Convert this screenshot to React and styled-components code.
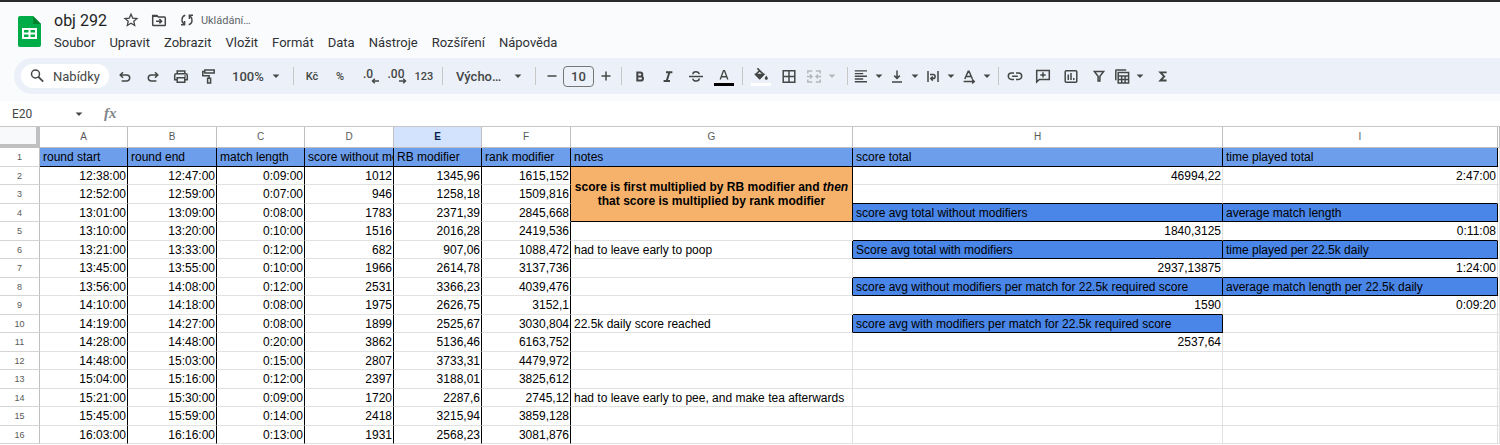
import React from 'react';
import styled, { createGlobalStyle, css } from 'styled-components';

const GlobalStyle = createGlobalStyle`
  * {
    box-sizing: border-box;
  }

  body {
    margin: 0;
    background: #fff;
    color: #444746;
    font-family: Roboto, 'Liberation Sans', sans-serif;
    font-size: 13px;
  }
`;

const Page = styled.div`
  height: 100vh;
  overflow: hidden;
`;

const Top = styled.header`
  padding: 7px 0;
  border-top: 2px solid #2b2b2e;
  background: #f9fbfd;
`;

const TitleBar = styled.div`
  display: flex;
  align-items: flex-start;
  padding-left: 18px;
`;

const Logo = styled.svg`
  display: block;
  width: 23px;
  height: 31px;
  margin: 7px 8px 0 0;
`;

const TitleRow = styled.div`
  display: flex;
  align-items: center;
  height: 22px;
  padding-left: 5px;
`;

const DocTitle = styled.h1`
  margin: 0 10px 0 0;
  color: #1f1f1f;
  font-size: 16px;
  font-weight: 400;
`;

const Status = styled.span`
  color: #5f6368;
  font-size: 11px;
`;

const Menu = styled.nav`
  display: flex;
  gap: 14px;
  height: 22px;
  align-items: center;
  padding-left: 5px;
`;

const MenuItem = styled.button`
  padding: 0;
  border: 0;
  background: none;
  color: #303134;
  font: inherit;
`;

const Toolbar = styled.div`
  display: flex;
  align-items: center;
  height: 36px;
  margin: 5px 0 0 14px;
  padding-left: 7px;
  border-radius: 18px 0 0 18px;
  background: #ecf1f9;
`;

const Search = styled.button`
  display: flex;
  align-items: center;
  gap: 7px;
  width: 88px;
  height: 24px;
  margin-right: 2px;
  padding: 0 0 0 7px;
  border: 0;
  border-radius: 12px;
  background: #fff;
  color: #444746;
  font: inherit;
`;

const Tool = styled.button`
  display: flex;
  flex: none;
  align-items: center;
  justify-content: center;
  width: ${({ $width }) => $width || 28}px;
  height: 24px;
  padding: 0;
  border: 0;
  background: none;
  color: ${({ $muted }) => ($muted ? '#b4b7bb' : '#444746')};
  font: inherit;
  font-size: ${({ $small }) => ($small ? 11 : 13)}px;
  font-weight: 500;
`;

const TextTool = styled(Tool)`
  justify-content: space-between;
  padding: 0 4px 0 9px;
`;

const DecimalTool = styled(Tool)`
  flex-direction: column;
  font-size: 12px;
  line-height: 12px;
`;

const BarTool = styled(Tool)`
  flex-direction: column;

  &::after {
    content: '';
    width: 20px;
    height: 3px;
    margin-top: -1px;
    background: ${({ $bar }) => $bar};
  }
`;

const Divider = styled.div`
  flex: none;
  width: 1px;
  height: 18px;
  margin: 0 ${({ $gap }) => $gap || 4}px;
  background: #c7c7c7;
`;

const SizeInput = styled.input`
  width: 31px;
  height: 21px;
  padding: 0;
  border: 1px solid #747775;
  border-radius: 4px;
  background: transparent;
  color: #444746;
  font: inherit;
  font-weight: 500;
  text-align: center;
`;

const Glyph = styled.svg`
  display: block;
  flex: none;
  width: 18px;
  height: 18px;
  fill: none;
  stroke: currentColor;
`;

const DecimalArrow = styled(Glyph)`
  width: 8px;
  height: 6px;
  margin-top: -2px;
  margin-left: 14px;
`;

const FormulaBar = styled.div`
  display: flex;
  align-items: center;
  height: 25px;
  padding-left: 12px;
`;

const NameBox = styled.input`
  width: 58px;
  padding: 0;
  border: 0;
  background: none;
  color: #444746;
  font: inherit;
  font-size: 12px;
`;

const Fx = styled.span`
  margin-left: 16px;
  color: #80868b;
  font-family: 'Liberation Serif', serif;
  font-size: 15px;
  font-style: italic;
  font-weight: 700;
`;

const Sheet = styled.table`
  width: 100%;
  table-layout: fixed;
  border-collapse: separate;
  border-spacing: 0;
  border-top: 1px solid #c7c7c7;
  color: #000;
  font-family: 'Liberation Sans', Arial, sans-serif;
  font-size: 12px;
  line-height: 16px;
`;

const Row = styled.tr`
  height: 18px;

  &:nth-child(odd) {
    height: 19px;
  }
`;

const ColumnHead = styled.th`
  height: 21px;
  padding: 0;
  border-right: 1px solid #c0c0c0;
  border-bottom: 1px solid #c0c0c0;
  background: ${({ $active }) => ($active ? '#d3e3fd' : '#fff')};
  color: ${({ $active }) => ($active ? '#041e49' : '#575a5a')};
  font-size: 10px;
  font-weight: ${({ $active }) => ($active ? 700 : 400)};
`;

const Corner = styled.td`
  padding: 0;
  border-right: 4px solid #c0c0c0;
  border-bottom: 4px solid #c0c0c0;
  background: #f8f9fa;
`;

const RowHead = styled.th`
  padding: 0;
  border-right: 1px solid #c0c0c0;
  border-bottom: 1px solid #d5d5d5;
  color: #575a5a;
  font-size: 9px;
  font-weight: 400;
`;

const fills = {
  head: '#6d9eeb',
  label: '#4a86e8',
  note: '#f6b26b',
};

const Cell = styled.td`
  padding: 0 0 0 3px;
  overflow: hidden;
  border-right: 1px solid ${({ $right }) => ($right ? '#000' : '#e1e1e1')};
  border-bottom: 1px solid ${({ $bottom }) => ($bottom ? '#000' : '#e1e1e1')};
  background: ${({ $fill }) => fills[$fill] || '#fff'};
  text-align: ${({ $number }) => ($number ? 'right' : 'left')};
  white-space: nowrap;

  ${({ $number }) =>
    $number &&
    css`
      padding-right: 1px;
    `}

  ${({ $fill }) =>
    $fill === 'note' &&
    css`
      padding: 0 3px;
      line-height: 14px;
      font-weight: 700;
      text-align: center;
      white-space: normal;
    `}
`;

const Icon = ({ children, ...props }) => (
  <Glyph viewBox="0 0 18 18" strokeWidth="1.5" aria-hidden="true" {...props}>
    {children}
  </Glyph>
);

const Caret = () => (
  <Icon>
    <path d="M5.6 7.5h6.8L9 11z" fill="currentColor" stroke="none" />
  </Icon>
);

const StarIcon = () => (
  <Icon strokeWidth="1.3">
    <path d="M9 3.2l1.7 3.9 4.3.4-3.2 2.8.9 4.2L9 12.3l-3.7 2.2.9-4.2L3 7.5l4.3-.4z" />
  </Icon>
);

const MoveIcon = () => (
  <Icon>
    <path d="M2.7 4.6h4.1l1.5 1.5h6.2q.8 0 .8.8v6.8q0 .8-.8.8H3.5q-.8 0-.8-.8z" />
    <path d="M3 5.3h5M6 10.2h5.4M9.4 8l2.2 2.2-2.2 2.2" />
  </Icon>
);

const SyncIcon = () => (
  <Icon>
    <path d="M7.3 4.2C3.6 5.2 2.8 10 5.6 12.7M3 13.7h3.6v-3.6M10.7 13.8c3.7-1 4.5-5.8 1.7-8.5M15 4.3h-3.6v3.6" />
  </Icon>
);

const SearchIcon = () => (
  <Icon>
    <circle cx="7.5" cy="7" r="4" />
    <path d="M10.4 9.9l4.8 4.8" strokeWidth="1.8" />
  </Icon>
);

const UndoIcon = () => (
  <Icon>
    <path d="M7 5.2L4.2 8l2.8 2.8M4.4 8h6.3a3 3 0 0 1 0 6H5.6" />
  </Icon>
);

const RedoIcon = () => (
  <Icon>
    <path d="M11 5.2L13.8 8 11 10.8M13.6 8H7.3a3 3 0 0 0 0 6h5.1" />
  </Icon>
);

const PrintIcon = () => (
  <Icon>
    <path d="M5.2 6.8V4.1h7.6v2.7M5 12.8H2.7V8.4q0-1.6 1.6-1.6h9.4q1.6 0 1.6 1.6v4.4H13M5.2 10.8h7.6v4.4H5.2z" />
    <path d="M12.3 8.9h1.5" />
  </Icon>
);

const PaintIcon = () => (
  <Icon>
    <path d="M4.8 2.9h9.4v3.2H4.8zM4.8 4.5H2.8v4.3h6.3v2.4M7.6 11.2h3v4.8h-3z" />
  </Icon>
);

const MinusIcon = () => (
  <Icon>
    <path d="M4.5 9h9" />
  </Icon>
);

const PlusIcon = () => (
  <Icon>
    <path d="M4.5 9h9M9 4.5v9" />
  </Icon>
);

const BoldIcon = () => (
  <Icon strokeWidth="2">
    <path d="M6.3 5.4h3a2 2 0 0 1 0 4h-3zM6.3 9.4h3.6a2.1 2.1 0 0 1 0 4.2H6.3z" />
  </Icon>
);

const ItalicIcon = () => (
  <Icon strokeWidth="1.9">
    <path d="M7 5.3h6.4M4.6 14H11M10.4 5.4l-2.7 8.5" />
  </Icon>
);

const StrikeIcon = () => (
  <Icon>
    <path d="M2 9.4h14M12.2 7.2C11.6 3.8 6 4 5.9 7.2M5.8 11.6c.5 3.4 6.4 3.2 6.4 0" />
  </Icon>
);

const TextColorIcon = () => (
  <Icon strokeWidth="1.4">
    <path d="M5.2 13.6L8.5 4.6h1l3.3 9M6.4 10.8h5.2" />
  </Icon>
);

const FillIcon = () => (
  <Icon>
    <path d="M5.4 2.4l6.3 6.2-4 4-4.1-4 4.6-4.5" />
    <path d="M4 8.6h7.4L7.7 12.2z" fill="currentColor" />
    <path d="M14.3 9.4c2.7 3.3 1.2 4.3 0 4.3s-2.7-1 0-4.3z" fill="currentColor" stroke="none" />
  </Icon>
);

const BordersIcon = () => (
  <Icon>
    <path d="M3.2 3.7h11.6v11.6H3.2zM9 3.7v11.6M3.2 9.5h11.6" />
  </Icon>
);

const MergeIcon = () => (
  <Icon>
    <path d="M2.8 6.4V4.1h4.4M10.8 4.1h4.4v2.3M2.8 12.6v2.3h4.4M10.8 14.9h4.4v-2.3M1.8 9.5h5M5 7.5l2 2-2 2M16.2 9.5h-5M13 7.5l-2 2 2 2" />
  </Icon>
);

const AlignIcon = () => (
  <Icon strokeWidth="1.4">
    <path d="M2.8 3.9H15M2.8 6.6h8.4M2.8 9.3H15M2.8 12h8.4M2.8 14.7H15" />
  </Icon>
);

const BottomIcon = () => (
  <Icon>
    <path d="M9 3.6v7.8M6.2 8.6L9 11.4l2.8-2.8M4 15h10" />
  </Icon>
);

const WrapIcon = () => (
  <Icon>
    <path d="M4 4v11M14 4v11M6 7.4h3a2.1 2.1 0 0 1 0 4.2H7M8.8 9.6l-2 2 2 2" />
  </Icon>
);

const RotateIcon = () => (
  <Icon>
    <path d="M4.8 12L8.2 4.2h.8l3.4 7.8M6 9.6h5.2M3.6 14.4h10.2M12.2 12.4l2 2-2 2" />
  </Icon>
);

const LinkIcon = () => (
  <Icon>
    <path d="M8 6H5.5a3.2 3.2 0 0 0 0 6.4H8M10 6h2.5a3.2 3.2 0 0 1 0 6.4H10M6.2 9.2h5.6" />
  </Icon>
);

const CommentIcon = () => (
  <Icon>
    <path d="M2.7 15V3.5h12.6v8.9H5.3zM9 5.2v5.4M6.3 7.9h5.4" />
  </Icon>
);

const ChartIcon = () => (
  <Icon>
    <rect x="3.2" y="3.7" width="11.6" height="11.6" rx="1" />
    <path d="M6.3 7.6v5.4M9 6v7M11.8 11v2" />
  </Icon>
);

const FilterIcon = () => (
  <Icon>
    <path d="M4.4 4.5h9.2L9.9 9.2v4.9H8.1V9.2z" />
  </Icon>
);

const TableIcon = () => (
  <Icon>
    <path d="M2.8 13.2V3.6q0-.6.6-.6h9.8M5.2 5.5h10.4v10.4H5.2zM5.2 8.9h10.4M8.7 8.9v7M12.1 8.9v7M5.2 12.4h10.4" />
  </Icon>
);

const SumIcon = () => (
  <Icon strokeWidth="1.9">
    <path d="M12.6 5.4H6.4l3.8 4-3.8 4.1h6.2" />
  </Icon>
);

const CaretTool = ({ label, muted, width = 36, children }) => (
  <Tool $width={width} $muted={muted} aria-label={label}>
    {children}
    <Caret />
  </Tool>
);

const menus = ['Soubor', 'Upravit', 'Zobrazit', 'Vložit', 'Formát', 'Data', 'Nástroje', 'Rozšíření', 'Nápověda'];

const columns = [
  ['A', 88],
  ['B', 89],
  ['C', 88],
  ['D', 89],
  ['E', 88],
  ['F', 89],
  ['G', 282],
  ['H', 370],
  ['I', 275],
];

const heads = [
  'round start',
  'round end',
  'match length',
  'score without modifiers',
  'RB modifier',
  'rank modifier',
  'notes',
  'score total',
  'time played total',
];

const rounds = [
  ['12:38:00', '12:47:00', '0:09:00', '1012', '1345,96', '1615,152'],
  ['12:52:00', '12:59:00', '0:07:00', '946', '1258,18', '1509,816'],
  ['13:01:00', '13:09:00', '0:08:00', '1783', '2371,39', '2845,668'],
  ['13:10:00', '13:20:00', '0:10:00', '1516', '2016,28', '2419,536'],
  ['13:21:00', '13:33:00', '0:12:00', '682', '907,06', '1088,472'],
  ['13:45:00', '13:55:00', '0:10:00', '1966', '2614,78', '3137,736'],
  ['13:56:00', '14:08:00', '0:12:00', '2531', '3366,23', '4039,476'],
  ['14:10:00', '14:18:00', '0:08:00', '1975', '2626,75', '3152,1'],
  ['14:19:00', '14:27:00', '0:08:00', '1899', '2525,67', '3030,804'],
  ['14:28:00', '14:48:00', '0:20:00', '3862', '5136,46', '6163,752'],
  ['14:48:00', '15:03:00', '0:15:00', '2807', '3733,31', '4479,972'],
  ['15:04:00', '15:16:00', '0:12:00', '2397', '3188,01', '3825,612'],
  ['15:21:00', '15:30:00', '0:09:00', '1720', '2287,6', '2745,12'],
  ['15:45:00', '15:59:00', '0:14:00', '2418', '3215,94', '3859,128'],
  ['16:03:00', '16:16:00', '0:13:00', '1931', '2568,23', '3081,876'],
];

const notes = {
  6: 'had to leave early to poop',
  10: '22.5k daily score reached',
  14: 'had to leave early to pee, and make tea afterwards',
};

// summary columns, keyed by sheet row
const labels = {
  4: ['score avg total without modifiers', 'average match length'],
  6: ['Score avg total with modifiers', 'time played per 22.5k daily'],
  8: ['score avg without modifiers per match for 22.5k required score', 'average match length per 22.5k daily'],
  10: ['score avg with modifiers per match for 22.5k required score'],
};

const totals = {
  2: ['46994,22', '2:47:00'],
  5: ['1840,3125', '0:11:08'],
  7: ['2937,13875', '1:24:00'],
  9: ['1590', '0:09:20'],
  11: ['2537,64'],
};

const SummaryCell = ({ row, index }) => {
  const label = labels[row]?.[index];
  const next = labels[row + 1]?.[index];

  return (
    <Cell
      $fill={label && 'label'}
      $number={!label}
      $right={label}
      $bottom={label || next}
    >
      {label || totals[row]?.[index]}
    </Cell>
  );
};

const SheetRow = ({ row, values }) => (
  <Row>
    <RowHead scope="row">{row}</RowHead>
    {values.map((value, i) => (
      <Cell key={i} $number $right>
        {value}
      </Cell>
    ))}
    {row === 2 && (
      <Cell rowSpan={3} $fill="note" $right $bottom>
        score is first multiplied by RB modifier and <em>then</em> that score is multiplied by rank modifier
      </Cell>
    )}
    {row > 4 && <Cell $right={labels[row]}>{notes[row]}</Cell>}
    <SummaryCell row={row} index={0} />
    <SummaryCell row={row} index={1} />
    <Cell />
  </Row>
);

export default () => (
  <Page>
    <GlobalStyle />
    <Top>
      <TitleBar>
        <Logo viewBox="0 0 23 31" aria-hidden="true">
          <path d="M2 0h13l8 8v21q0 2-2 2H2q-2 0-2-2V2q0-2 2-2z" fill="#00ac47" />
          <path d="M15 0l8 8h-8z" fill="#00832d" />
          <path d="M4 12h15v11H4zM6 14v2.5h4.5V14zM12.5 14v2.5H17V14zM6 18.5V21h4.5v-2.5zM12.5 18.5V21H17v-2.5z" fill="#fff" fillRule="evenodd" />
        </Logo>
        <div>
          <TitleRow>
            <DocTitle>obj 292</DocTitle>
            <Tool aria-label="Hvězdička"><StarIcon /></Tool>
            <Tool aria-label="Přesunout"><MoveIcon /></Tool>
            <Tool aria-label="Stav"><SyncIcon /></Tool>
            <Status>Ukládání…</Status>
          </TitleRow>
          <Menu>
            {menus.map((name) => (
              <MenuItem key={name}>{name}</MenuItem>
            ))}
          </Menu>
        </div>
      </TitleBar>

      <Toolbar>
        <Search>
          <SearchIcon />
          Nabídky
        </Search>
        <Tool aria-label="Zpět"><UndoIcon /></Tool>
        <Tool aria-label="Znovu"><RedoIcon /></Tool>
        <Tool aria-label="Tisk"><PrintIcon /></Tool>
        <Tool aria-label="Kopírovat formát"><PaintIcon /></Tool>
        <TextTool $width={66}>100%<Caret /></TextTool>
        <Divider />
        <Tool $small>Kč</Tool>
        <Tool $small>%</Tool>
        <DecimalTool>
          .0
          <DecimalArrow viewBox="0 0 8 6" strokeWidth="1.4">
            <path d="M8 3H1.5M3.8.8L1.5 3l2.3 2.2" />
          </DecimalArrow>
        </DecimalTool>
        <DecimalTool>
          .00
          <DecimalArrow viewBox="0 0 8 6" strokeWidth="1.4">
            <path d="M0 3h6.5M4.2.8L6.5 3 4.2 5.2" />
          </DecimalArrow>
        </DecimalTool>
        <Tool $small>123</Tool>
        <Divider />
        <TextTool $width={84}>Výcho…<Caret /></TextTool>
        <Divider />
        <Tool $width={23} aria-label="Zmenšit"><MinusIcon /></Tool>
        <SizeInput aria-label="Velikost písma" defaultValue="10" />
        <Tool $width={23} aria-label="Zvětšit"><PlusIcon /></Tool>
        <Divider />
        <Tool aria-label="Tučné"><BoldIcon /></Tool>
        <Tool aria-label="Kurzíva"><ItalicIcon /></Tool>
        <Tool aria-label="Přeškrtnuté"><StrikeIcon /></Tool>
        <BarTool $bar="#000" aria-label="Barva textu"><TextColorIcon /></BarTool>
        <Divider />
        <BarTool $bar="#fff" aria-label="Barva výplně"><FillIcon /></BarTool>
        <Tool aria-label="Ohraničení"><BordersIcon /></Tool>
        <CaretTool label="Sloučit" width={40} muted><MergeIcon /></CaretTool>
        <Divider />
        <CaretTool label="Vodorovné zarovnání"><AlignIcon /></CaretTool>
        <CaretTool label="Svislé zarovnání"><BottomIcon /></CaretTool>
        <CaretTool label="Zalamování"><WrapIcon /></CaretTool>
        <CaretTool label="Otočení"><RotateIcon /></CaretTool>
        <Divider $gap={2} />
        <Tool aria-label="Odkaz"><LinkIcon /></Tool>
        <Tool aria-label="Komentář"><CommentIcon /></Tool>
        <Tool aria-label="Graf"><ChartIcon /></Tool>
        <Tool aria-label="Filtr"><FilterIcon /></Tool>
        <CaretTool label="Zobrazení filtru"><TableIcon /></CaretTool>
        <Tool aria-label="Funkce"><SumIcon /></Tool>
      </Toolbar>
    </Top>

    <FormulaBar>
      <NameBox aria-label="Buňka" defaultValue="E20" />
      <Caret />
      <Fx>fx</Fx>
    </FormulaBar>

    <Sheet>
      <colgroup>
        <col width="40" />
        {columns.map(([name, width]) => (
          <col key={name} width={width} />
        ))}
        <col />
      </colgroup>
      <thead>
        <tr>
          <Corner />
          {columns.map(([name]) => (
            <ColumnHead key={name} scope="col" $active={name === 'E'}>
              {name}
            </ColumnHead>
          ))}
          <ColumnHead />
        </tr>
      </thead>
      <tbody>
        <Row>
          <RowHead scope="row">1</RowHead>
          {heads.map((name) => (
            <Cell key={name} $fill="head" $right $bottom>
              {name}
            </Cell>
          ))}
          <Cell />
        </Row>
        {rounds.map((values, i) => (
          <SheetRow key={i} row={i + 2} values={values} />
        ))}
      </tbody>
    </Sheet>
  </Page>
);
